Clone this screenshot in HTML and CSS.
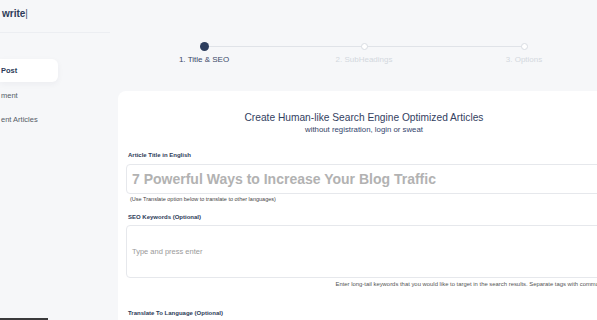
FILE: index.html
```html
<!DOCTYPE html>
<html>
<head lang="en">
    <meta charset="UTF-8">
    <title>write</title>
    <link rel="stylesheet" href="styles.css">
</head>
<body>
  <div class="app">
    <div class="sidebar">
      <div class="logo">write<span class="cursor">|</span></div>
      <ul class="nav">
        <li class="active">Post</li>
        <li>ment</li>
        <li>ent Articles</li>
      </ul>
      <div class="user-box"></div>
    </div>
    <div class="main">
      <div class="steps">
        <div class="step done"><i></i><span>1. Title &amp; SEO</span></div>
        <div class="step"><i></i><span>2. SubHeadings</span></div>
        <div class="step last"><i></i><span>3. Options</span></div>
      </div>
      <div class="card">
        <h1>Create Human-like Search Engine Optimized Articles</h1>
        <p class="sub">without <a>registration</a>, <a>login</a> or <a>sweat</a></p>

        <label>Article Title in English</label>
        <div class="input big">7 Powerful Ways to Increase Your Blog Traffic</div>
        <p class="note">(Use Translate option below to translate to other languages)</p>

        <label>SEO Keywords (Optional)</label>
        <div class="input tags">Type and press enter</div>
        <p class="help">Enter long-tail keywords that you would like to target in the search results. Separate tags with commas</p>

        <label class="lang">Translate To Language (Optional)</label>
        <div class="select"></div>
      </div>
    </div>
  </div>
</body>
</html>
```

FILE: styles.css
```css
*{
  margin: 0;
  padding: 0;
  box-sizing: border-box;
}
body{
  background: #f6f7f9;
  font-family: "Liberation Sans", Arial, sans-serif;
  color: #2f3d5c;
  overflow: hidden;
  height: 320px;
}
.app{
  display: flex;
}
.sidebar{
  width: 110px;
  flex: none;
}
.logo{
  height: 33px;
  padding: 8px 0 0 2px;
  font-size: 10px;
  font-weight: bold;
  color: #2d3b58;
  border-bottom: 1px solid #eceef2;
}
.cursor{
  font-weight: normal;
  color: #4a5670;
}
.nav{
  list-style: none;
  padding-top: 26px;
}
.nav li{
  height: 24px;
  line-height: 24px;
  font-size: 7.5px;
  color: #555c68;
  padding-left: 1px;
}
.nav li.active{
  width: 58px;
  height: 23px;
  line-height: 23px;
  margin-bottom: 2px;
  background: #fff;
  border-radius: 0 6px 6px 0;
  box-shadow: 0 2px 6px rgba(30, 40, 70, 0.05);
  color: #2d3b58;
  font-weight: bold;
}
.user-box{
  margin-top: 186px;
  width: 48px;
  height: 30px;
  background: #3a3a3c;
}
.main{
  width: 500px;
  flex: none;
  padding: 42px 0 0 8px;
}
.steps{
  display: grid;
  grid-template-columns: repeat(3, 160px);
  justify-content: center;
}
.step{
  position: relative;
  display: flex;
  flex-direction: column;
  align-items: center;
}
.step i{
  display: block;
  width: 7px;
  height: 7px;
  margin: 1px 0;
  border-radius: 50%;
  background: #fff;
  border: 1px solid #d9dde3;
  position: relative;
  z-index: 1;
}
.step.done i{
  width: 9px;
  height: 9px;
  margin: 0;
  background: #2d3e5e;
  border: none;
}
.step::after{
  content: "";
  position: absolute;
  top: 4px;
  left: 50%;
  width: 100%;
  height: 1px;
  background: #e0e3e8;
}
.step.last::after{
  display: none;
}
.step span{
  margin-top: 3px;
  font-size: 8px;
  line-height: 12px;
  color: #d3d7de;
}
.step.done span{
  color: #3a4868;
}
.card{
  margin-top: 25px;
  background: #fff;
  border-radius: 8px;
  padding: 20px 8px 0;
  height: 260px;
}
.card h1{
  font-size: 10.2px;
  font-weight: normal;
  text-align: center;
  color: #33415f;
  line-height: 13px;
}
.sub{
  font-size: 7.8px;
  text-align: center;
  color: #33415f;
  line-height: 12px;
  margin-bottom: 15px;
}
.sub a{
  color: #33456e;
}
label{
  display: block;
  margin: 9px 0 0 2px;
  font-size: 6px;
  font-weight: bold;
  color: #2d3b58;
  line-height: 9px;
}
.input{
  margin-top: 4px;
  border: 1px solid #e6e8ec;
  border-radius: 4px;
  padding-left: 5px;
  color: #b2b2b2;
}
.input.big{
  height: 30px;
  line-height: 28px;
  font-size: 14px;
  font-weight: bold;
}
.note{
  margin: 1px 0 0 4px;
  font-size: 5.5px;
  line-height: 9px;
  color: #444;
}
.input.tags{
  margin-top: 3px;
  height: 53px;
  line-height: 51px;
  font-size: 7.5px;
  color: #9a9a9a;
}
.help{
  margin-top: 2px;
  font-size: 5.9px;
  line-height: 9px;
  text-align: right;
  color: #555;
  white-space: nowrap;
}
label.lang{
  margin-top: 20px;
}
.select{
  margin-top: 3px;
  width: 238px;
  height: 30px;
  border: 1px solid #e6e8ec;
  border-radius: 4px;
}
```
